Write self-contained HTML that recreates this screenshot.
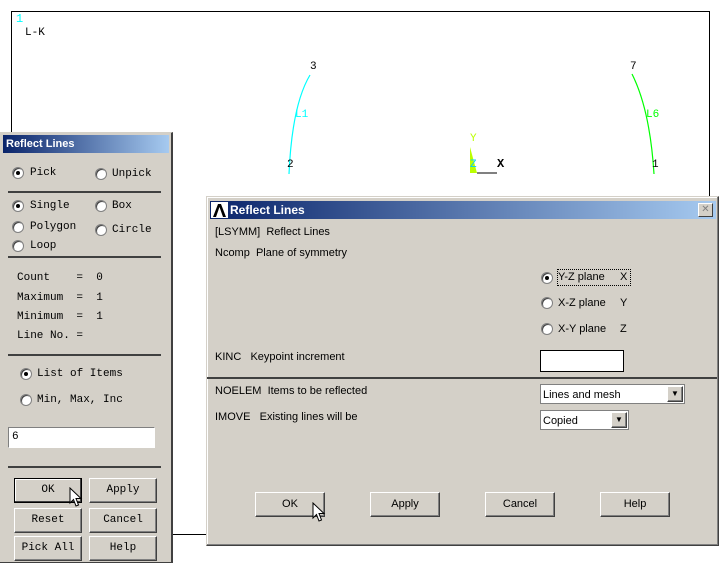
<!DOCTYPE html>
<html><head><meta charset="utf-8"><style>
*{margin:0;padding:0;box-sizing:border-box}
body{width:720px;height:574px;background:#fff;position:relative;overflow:hidden;font-family:"Liberation Sans",sans-serif}
.a{position:absolute}
.mono{font-family:"Liberation Mono",monospace;font-size:11px;color:#000}
.sans{font-family:"Liberation Sans",sans-serif;font-size:11px;color:#000}
.rad{position:absolute;width:12px;height:12px;border-radius:50%;background:#fff;border:1px solid #808080;box-shadow:inset 1px 1px 0 #404040}
.rad.on::after{content:"";position:absolute;left:3px;top:3px;width:4px;height:4px;border-radius:50%;background:#000}
.sep{position:absolute;height:2px;background:#404040}
.btn{position:absolute;background:#d4d0c8;border:1px solid;border-color:#fff #404040 #404040 #fff;box-shadow:inset -1px -1px 0 #808080;text-align:center}
.title{position:absolute;height:18px;background:linear-gradient(to right,#0a246a,#a6caf0);color:#fff;font-weight:bold;font-size:11px;line-height:18px}
</style></head><body>
<!-- graphics frame -->
<div class="a" style="left:11px;top:11px;width:699px;height:524px;border:1px solid #000"></div>
<div class="a mono" style="left:16px;top:12px;color:#0ff;font-size:12px">1</div>
<div class="a mono" style="left:25px;top:27px">L-K</div>
<svg class="a" style="left:0;top:0" width="720" height="574">
<path d="M310 75 Q292 105 289 174" stroke="#0ff" fill="none" stroke-width="1.2"/>
<path d="M632 74 Q650 110 654 174" stroke="#0f0" fill="none" stroke-width="1.2"/>
<polygon points="470,147 470,173 477,173" fill="#bf0"/>
<line x1="477" y1="173" x2="497" y2="173" stroke="#000"/>
</svg>
<div class="a mono" style="left:310px;top:61px">3</div>
<div class="a mono" style="left:295px;top:109px;color:#0ff">L1</div>
<div class="a mono" style="left:287px;top:159px">2</div>
<div class="a mono" style="left:630px;top:61px">7</div>
<div class="a mono" style="left:646px;top:109px;color:#0f0">L6</div>
<div class="a mono" style="left:652px;top:159px">1</div>
<div class="a mono" style="left:470px;top:133px;color:#bf0">Y</div>
<div class="a mono" style="left:470px;top:159px;color:#0cf">Z</div>
<div class="a mono" style="left:497px;top:157px;font-weight:bold;font-size:12px">X</div>

<!-- left dialog -->
<div class="a" style="left:0;top:132px;width:173px;height:431px;background:#d4d0c8;border-right:2px solid #404040;border-bottom:1px solid #404040;border-top:1px solid #d4d0c8"></div>
<div class="title" style="left:3px;top:135px;width:166px;padding-left:3px">Reflect Lines</div>
<div class="rad on" style="left:12px;top:167px"></div><div class="a mono" style="left:30px;top:167px">Pick</div>
<div class="rad" style="left:95px;top:168px"></div><div class="a mono" style="left:112px;top:168px">Unpick</div>
<div class="sep" style="left:8px;top:191px;width:153px"></div>
<div class="rad on" style="left:12px;top:200px"></div><div class="a mono" style="left:30px;top:200px">Single</div>
<div class="rad" style="left:95px;top:200px"></div><div class="a mono" style="left:112px;top:200px">Box</div>
<div class="rad" style="left:12px;top:221px"></div><div class="a mono" style="left:30px;top:221px">Polygon</div>
<div class="rad" style="left:95px;top:224px"></div><div class="a mono" style="left:112px;top:224px">Circle</div>
<div class="rad" style="left:12px;top:240px"></div><div class="a mono" style="left:30px;top:240px">Loop</div>
<div class="sep" style="left:8px;top:256px;width:153px"></div>
<div class="a mono" style="left:17px;top:272px;white-space:pre">Count    =  0</div>
<div class="a mono" style="left:17px;top:292px;white-space:pre">Maximum  =  1</div>
<div class="a mono" style="left:17px;top:311px;white-space:pre">Minimum  =  1</div>
<div class="a mono" style="left:17px;top:330px;white-space:pre">Line No. =</div>
<div class="sep" style="left:8px;top:354px;width:153px"></div>
<div class="rad on" style="left:20px;top:368px"></div><div class="a mono" style="left:37px;top:368px">List of Items</div>
<div class="rad" style="left:20px;top:394px"></div><div class="a mono" style="left:37px;top:394px">Min, Max, Inc</div>
<div class="a" style="left:8px;top:427px;width:147px;height:21px;background:#fff;border:1px solid #808080;border-right-color:#fff;border-bottom-color:#fff"></div>
<div class="a mono" style="left:12px;top:431px">6</div>
<div class="sep" style="left:8px;top:466px;width:153px"></div>
<div class="btn mono" style="left:14px;top:478px;width:68px;height:25px;line-height:23px;border-color:#000;box-shadow:inset -1px -1px 0 #404040,inset 1px 1px 0 #fff">OK</div>
<div class="btn mono" style="left:89px;top:478px;width:68px;height:25px;line-height:23px">Apply</div>
<div class="btn mono" style="left:14px;top:508px;width:68px;height:25px;line-height:23px">Reset</div>
<div class="btn mono" style="left:89px;top:508px;width:68px;height:25px;line-height:23px">Cancel</div>
<div class="btn mono" style="left:14px;top:536px;width:68px;height:25px;line-height:23px">Pick All</div>
<div class="btn mono" style="left:89px;top:536px;width:68px;height:25px;line-height:23px">Help</div>

<!-- main dialog -->
<div class="a" style="left:206px;top:196px;width:513px;height:350px;background:#d4d0c8;border:1px solid;border-color:#d4d0c8 #404040 #404040 #d4d0c8;box-shadow:inset -1px -1px 0 #808080,inset 1px 1px 0 #fff"></div>
<div class="title" style="left:210px;top:201px;width:506px;padding-left:20px;font-size:12px">Reflect Lines</div>
<svg class="a" style="left:211px;top:202px" width="17" height="16"><rect width="17" height="16" fill="#fff"/><path d="M2 15 L7 2 L10 2 L15 15 L12 15 L8.5 5 L5 15 Z" fill="#000"/></svg>
<div class="a" style="left:698px;top:203px;width:15px;height:14px;background:#d4d0c8;border:1px solid;border-color:#fff #404040 #404040 #fff;font-size:10px;line-height:11px;text-align:center;color:#808080">✕</div>
<div class="a sans" style="left:215px;top:226px">[LSYMM]&nbsp; Reflect Lines</div>
<div class="a sans" style="left:215px;top:247px">Ncomp&nbsp; Plane of symmetry</div>
<div class="rad on" style="left:541px;top:272px"></div>
<div class="a" style="left:557px;top:269px;width:74px;height:17px;border:1px dotted #000"></div>
<div class="a sans" style="left:558px;top:271px">Y-Z plane</div><div class="a sans" style="left:620px;top:271px">X</div>
<div class="rad" style="left:541px;top:297px"></div><div class="a sans" style="left:558px;top:297px">X-Z plane</div><div class="a sans" style="left:620px;top:297px">Y</div>
<div class="rad" style="left:541px;top:323px"></div><div class="a sans" style="left:558px;top:323px">X-Y plane</div><div class="a sans" style="left:620px;top:323px">Z</div>
<div class="a sans" style="left:215px;top:351px">KINC&nbsp;&nbsp; Keypoint increment</div>
<div class="a" style="left:540px;top:350px;width:84px;height:22px;background:#fff;border:1px solid #000"></div>
<div class="a" style="left:207px;top:377px;width:510px;height:2px;background:#404040"></div>
<div class="a sans" style="left:215px;top:385px">NOELEM&nbsp; Items to be reflected</div>
<div class="a sans" style="left:215px;top:411px">IMOVE&nbsp;&nbsp; Existing lines will be</div>
<div class="a" style="left:540px;top:384px;width:145px;height:20px;background:#fff;border:1px solid #808080"></div>
<div class="a sans" style="left:543px;top:389px">Lines and mesh</div>
<div class="btn" style="left:667px;top:386px;width:16px;height:16px;font-size:8px;line-height:14px">▼</div>
<div class="a" style="left:540px;top:410px;width:89px;height:20px;background:#fff;border:1px solid #808080"></div>
<div class="a sans" style="left:543px;top:415px">Copied</div>
<div class="btn" style="left:611px;top:412px;width:16px;height:16px;font-size:8px;line-height:14px">▼</div>
<div class="btn sans" style="left:255px;top:492px;width:70px;height:25px;line-height:23px">OK</div>
<div class="btn sans" style="left:370px;top:492px;width:70px;height:25px;line-height:23px">Apply</div>
<div class="btn sans" style="left:485px;top:492px;width:70px;height:25px;line-height:23px">Cancel</div>
<div class="btn sans" style="left:600px;top:492px;width:70px;height:25px;line-height:23px">Help</div>

<!-- cursors -->
<svg class="a" style="left:69px;top:487px" width="14" height="22"><path d="M1 1 L1 16 L4.5 12.5 L7 19 L9.5 18 L7 11.5 L12 11.5 Z" fill="#fff" stroke="#000"/></svg>
<svg class="a" style="left:312px;top:502px" width="14" height="22"><path d="M1 1 L1 16 L4.5 12.5 L7 19 L9.5 18 L7 11.5 L12 11.5 Z" fill="#fff" stroke="#000"/></svg>
</body></html>
